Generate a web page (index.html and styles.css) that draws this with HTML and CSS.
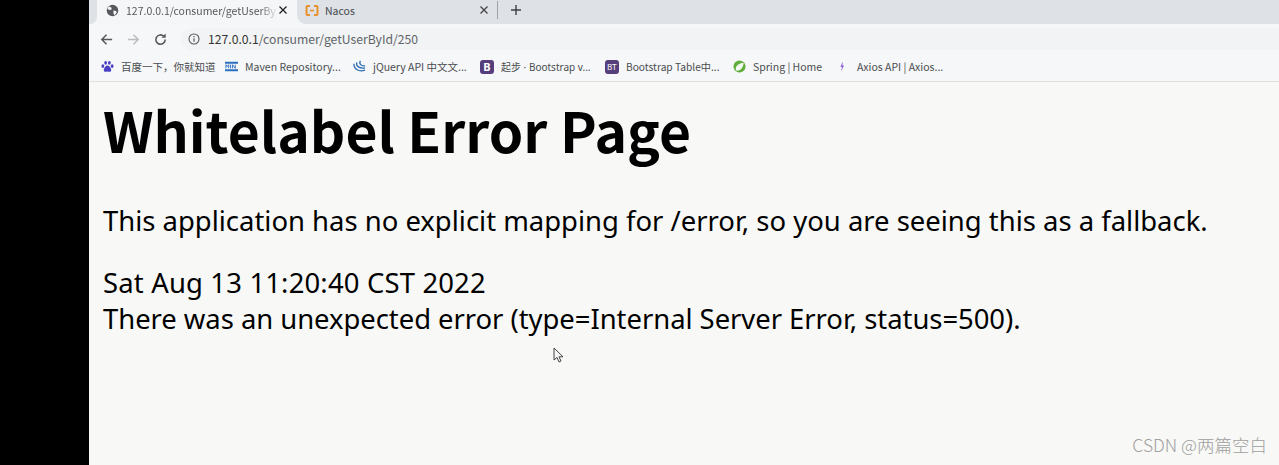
FILE: index.html
```html
<!DOCTYPE html>
<html lang="en">
<head>
<meta charset="utf-8">
<title>Whitelabel Error Page</title>
<link rel="stylesheet" href="styles.css">
</head>
<body>
<div class="screen">
  <div class="side"></div>
  <div class="window">
    <div class="tabstrip">
      <div class="strip-left"></div>
      <div class="tab active">
        <svg class="fav" viewBox="0 0 14 14"><circle cx="7" cy="7" r="6.2" fill="#55585c"/><path d="M3 2.500l3 1.500 0 2-2 .5-2.500-1zM8 7l3 .5.500 2-2.500 3-1-2.500z" fill="#f4f5f6"/></svg>
        <span class="tab-title fade">127.0.0.1/consumer/getUserBy</span>
        <svg class="close" viewBox="0 0 10 10"><path d="M1.500 1.500l7 7M8.500 1.500l-7 7" stroke="#222" stroke-width="1.300"/></svg>
      </div>
      <div class="strip-rest">
        <div class="tab other">
          <svg class="fav nacos" viewBox="0 0 14 12"><path d="M5 1.500H2.500q-1 0-1 1v7q0 1 1 1H5M9 1.500h2.500q1 0 1 1v7q0 1-1 1H9" fill="none" stroke="#e8912c" stroke-width="2"/><path d="M5 6h4" stroke="#e8912c" stroke-width="1.600"/></svg>
          <span class="tab-title">Nacos</span>
          <svg class="close" viewBox="0 0 10 10"><path d="M1.500 1.500l7 7M8.500 1.500l-7 7" stroke="#444" stroke-width="1.300"/></svg>
        </div>
        <div class="divider"></div>
        <svg class="plus" viewBox="0 0 12 12"><path d="M6 1v10M1 6h10" stroke="#3c4043" stroke-width="1.400"/></svg>
      </div>
    </div>
    <div class="toolbar">
      <svg class="nav" viewBox="0 0 16 16"><path d="M14 8H3M8 3L3 8l5 5" fill="none" stroke="#55585c" stroke-width="1.600"/></svg>
      <svg class="nav" viewBox="0 0 16 16"><path d="M2 8h11M8 3l5 5-5 5" fill="none" stroke="#babcbe" stroke-width="1.600"/></svg>
      <svg class="nav" viewBox="0 0 16 16"><path d="M13 8a5 5 0 1 1-1.500-3.500" fill="none" stroke="#55585c" stroke-width="1.700"/><path d="M13.500 1.500v4.500H9z" fill="#55585c"/></svg>
      <div class="omnibox">
        <svg class="info" viewBox="0 0 12 12"><circle cx="6" cy="6" r="5" fill="none" stroke="#55585c" stroke-width="1.100"/><path d="M6 5.200v3.600M6 3v1.200" stroke="#55585c" stroke-width="1.200"/></svg>
        <span class="url"><span class="host">127.0.0.1</span>/consumer/getUserById/250</span>
      </div>
    </div>
    <div class="bookmarks">
      <div class="mark mark-1">
        <svg class="bm" viewBox="0 0 14 14"><g fill="#4a3fc4"><ellipse cx="2" cy="6.500" rx="1.500" ry="2"/><ellipse cx="5" cy="3" rx="1.500" ry="2"/><ellipse cx="9" cy="3" rx="1.500" ry="2"/><ellipse cx="12" cy="6.500" rx="1.500" ry="2"/><path d="M7 6c2 0 4 3 4 5s-2 2-4 1.500C5 13 3 13 3 11s2-5 4-5z"/></g></svg>
        <span>百度一下，你就知道</span>
      </div>
      <div class="mark mark-2">
        <svg class="bm" viewBox="0 0 14 12"><path d="M0 1h14v2H0zM0 9h14v2H0z" fill="#2b6fc0"/><path d="M1 8V4l1.500 2L4 4v4M6 4v4M8 8V4l3 4V4" fill="none" stroke="#2b6fc0" stroke-width="1"/></svg>
        <span>Maven Repository...</span>
      </div>
      <div class="mark mark-3">
        <svg class="bm" viewBox="0 0 14 14"><g fill="none" stroke="#2f6fb5" stroke-width="1.400"><path d="M1 4c0 6 5 9 12 7"/><path d="M4 2.500c-1 4 3 7 9 6"/><path d="M8 1c-2 3 1 6 5 5"/></g></svg>
        <span>jQuery API 中文文...</span>
      </div>
      <div class="mark mark-4">
        <span class="badge">B</span>
        <span>起步 · Bootstrap v...</span>
      </div>
      <div class="mark mark-5">
        <span class="badge small">BT</span>
        <span class="bt-label">Bootstrap Table中...</span>
      </div>
      <div class="mark mark-6">
        <svg class="bm" viewBox="0 0 14 14"><circle cx="7" cy="7" r="6.500" fill="#5fae3c"/><path d="M3 10.500c-.5-4 3-7 8.500-7.500-.5 5-3 8.500-6.500 8.500-1 0-2 0-2-1z" fill="#f5f7f3"/></svg>
        <span>Spring | Home</span>
      </div>
      <div class="mark mark-7">
        <svg class="bm slim" viewBox="0 0 6 12"><path d="M3.500 1L1.500 6.500h1.500L2 11 5 5H3.500z" fill="#8e5fd6"/></svg>
        <span>Axios API | Axios...</span>
      </div>
    </div>
    <main class="page">
      <h1>Whitelabel Error Page</h1>
      <p class="lead">This application has no explicit mapping for /error, so you are seeing this as a fallback.</p>
      <div class="detail date">Sat Aug 13 11:20:40 CST 2022</div>
      <div class="detail message">There was an unexpected error (type=Internal Server Error, status=500).</div>
      <svg class="cursor" viewBox="0 0 12 17"><path d="M1 1v12l3-2.500 2 4.500 2-1-2-4.200h4z" fill="#f5f5f5" stroke="#444" stroke-width="1"/></svg>
      <div class="watermark">CSDN @两篇空白</div>
    </main>
  </div>
</div>
</body>
</html>
```
FILE: styles.css
```css
* { box-sizing: border-box; }
html, body { margin: 0; padding: 0; height: 100%; overflow: hidden; }
body { background: #000; font-family: "Noto Sans CJK SC", "Noto Sans", sans-serif; }
.screen { display: flex; width: 1279px; height: 465px; }
.side { width: 89px; background: #000; flex: none; }
.window { flex: 1; display: flex; flex-direction: column; min-width: 0; background: #f8f8f6; }

.tabstrip { height: 24px; background: #f5f6f7; display: flex; flex: none; }
.strip-left { width: 8px; background: #dee1e6; border-radius: 0 0 7px 0; flex: none; }
.strip-rest { flex: 1; display: flex; align-items: center; padding-bottom: 4px; background: #dee1e6; border-radius: 0 0 0 9px; }
.tab { display: flex; align-items: center; font-size: 10.500px; color: #45484c; flex: none; }
.tab.active { width: 200px; height: 24px; padding: 0 0 4px 9px; }
.tab.other { width: 201px; height: 20px; padding-left: 8px; }
.fav { width: 13px; height: 13px; flex: none; margin-right: 7px; }
.fav.nacos { width: 14px; margin-right: 6px; }
.tab-title { flex: 1; white-space: nowrap; overflow: hidden; }
.fade { color: #55585c; -webkit-mask-image: linear-gradient(90deg, #000 88%, transparent); mask-image: linear-gradient(90deg, #000 88%, transparent); }
.close { width: 10px; height: 10px; margin-right: 9px; flex: none; }
.divider { width: 1px; height: 18px; background: #9fa2a6; flex: none; margin-left: -1px; }
.plus { width: 12px; height: 12px; margin-left: 12px; flex: none; }

.toolbar { height: 30px; background: #f6f7f8; display: flex; align-items: center; flex: none; padding-left: 10px; }
.nav { width: 15px; height: 15px; flex: none; margin-right: 12px; }
.omnibox { flex: 1; height: 22px; margin-left: 1px; border-radius: 11px 0 0 11px; background: #f1f3f4; display: flex; align-items: center; padding-left: 7px; }
.info { width: 12px; height: 12px; flex: none; margin-right: 8px; }
.url { font-size: 12.200px; color: #5f6368; }
.host { color: #333; }

.bookmarks { height: 28px; background: #f6f7f8; border-bottom: 1px solid #e0e0df; display: flex; align-items: center; flex: none; padding: 0 0 2px 12px; font-size: 10.500px; color: #4a4d50; }
.mark { display: flex; align-items: center; white-space: nowrap; flex: none; }
.bm { width: 13px; height: 13px; flex: none; margin-right: 7px; }
.bm.slim { width: 6px; margin: 0 12px 0 4px; }
.mark-1 { width: 124px; }
.mark-2 { width: 128px; }
.mark-3 { width: 127px; }
.mark-4 { width: 125px; font-family: "Noto Sans", "Noto Sans CJK SC", sans-serif; font-size: 10px; }
.mark-5 { width: 128px; }
.mark-6 { width: 102px; }
.bt-label { font-size: 10.200px; }
.badge { width: 14px; height: 14px; border-radius: 3px; background: #563d7c; color: #fff; font-weight: bold; font-size: 11px; display: flex; align-items: center; justify-content: center; margin-right: 7px; flex: none; }
.badge.small { font-size: 8px; font-weight: normal; }

.page { flex: 1; position: relative; padding: 12px 14px 0; color: #000; min-height: 0; font-family: "Noto Sans", "Noto Sans CJK SC", sans-serif; }
h1 { margin: 0 0 39px; font-family: "Noto Sans CJK SC", "Noto Sans", sans-serif; font-size: 55.200px; line-height: 70px; font-weight: 700; white-space: nowrap; }
.lead { margin: 0 0 26px; font-size: 27.450px; line-height: 36px; white-space: nowrap; }
.detail { font-size: 27.450px; line-height: 36px; white-space: nowrap; }
.date { letter-spacing: 0.17px; }
.message { letter-spacing: -0.04px; }
.cursor { position: absolute; left: 464px; top: 265px; width: 12px; height: 17px; }
.watermark { position: absolute; right: 12px; bottom: 8px; font-family: "Noto Sans CJK SC", sans-serif; font-size: 17.500px; font-weight: 300; color: #a0a0a0; }
```
